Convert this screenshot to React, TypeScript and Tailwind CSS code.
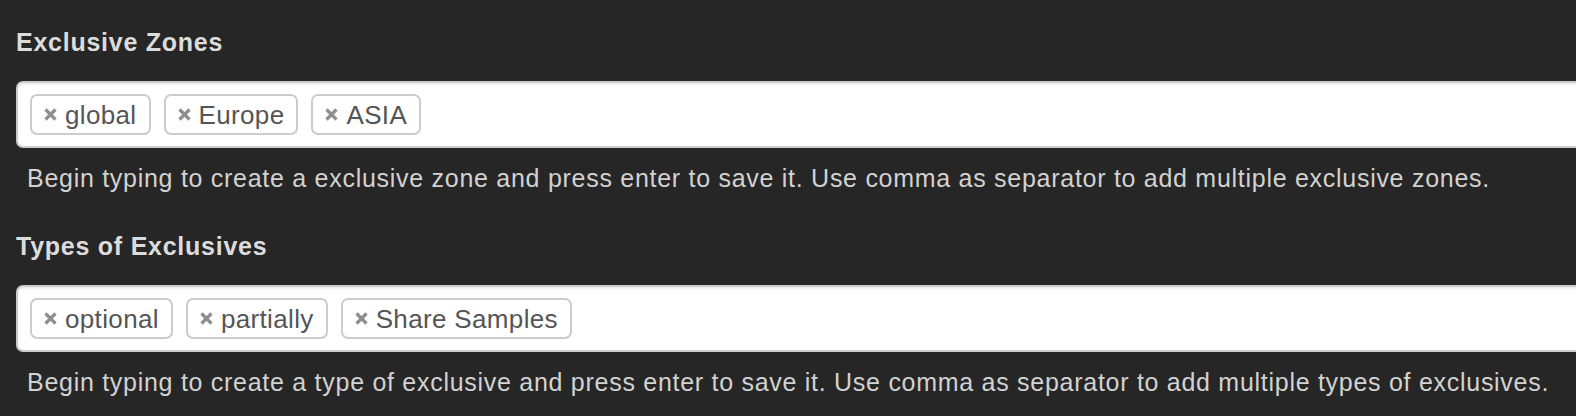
import { useState } from 'react';

interface TagFieldProps {
  title: string;
  tags: string[];
  help: string;
}

function RemoveIcon() {
  return (
    <svg width="13" height="13" viewBox="0 0 13 13" className="shrink-0">
      <path d="M1.5 1.5 L11.5 11.5 M11.5 1.5 L1.5 11.5" stroke="#8e8e8e" strokeWidth="3.2" />
    </svg>
  );
}

function TagField({ title, tags: initial, help }: TagFieldProps) {
  const [tags, setTags] = useState(initial);

  return (
    <div>
      {/* Label */}
      <h3 className="h-[28px] text-[25px] leading-[28px] font-bold tracking-[0.75px] text-[#dcdcdc]">{title}</h3>

      {/* Tags input */}
      <div className="mt-[25px] w-[1600px] h-[67px] bg-white border-2 border-[#cbcbcb] rounded-[7px] shadow-[inset_0_2px_2px_rgba(0,0,0,0.08)] flex items-center gap-[13px] pl-[12px]">
        {tags.map((tag) => (
          <span
            key={tag}
            className="h-[41px] flex items-center gap-[8px] px-[12px] border-2 border-[#cccccc] rounded-[7px] bg-white text-[26px] leading-none tracking-[0.35px] text-[#555555]"
          >
            <button onClick={() => setTags(tags.filter((t) => t !== tag))} className="flex items-center">
              <RemoveIcon />
            </button>
            <span>{tag}</span>
          </span>
        ))}
      </div>

      {/* Help text */}
      <p className="mt-[16px] ml-[11px] h-[28px] text-[25px] leading-[28px] tracking-[0.72px] text-[#d2d2d2] whitespace-nowrap">{help}</p>
    </div>
  );
}

export default function App() {
  return (
    <div
      className="w-full h-[416px] overflow-hidden bg-[#262626] pl-[16px] pt-[28px] flex flex-col gap-[40px]"
      style={{ fontFamily: '"Liberation Sans", Arial, sans-serif' }}
    >
      <TagField
        title="Exclusive Zones"
        tags={['global', 'Europe', 'ASIA']}
        help="Begin typing to create a exclusive zone and press enter to save it. Use comma as separator to add multiple exclusive zones."
      />
      <TagField
        title="Types of Exclusives"
        tags={['optional', 'partially', 'Share Samples']}
        help="Begin typing to create a type of exclusive and press enter to save it. Use comma as separator to add multiple types of exclusives."
      />
    </div>
  );
}
